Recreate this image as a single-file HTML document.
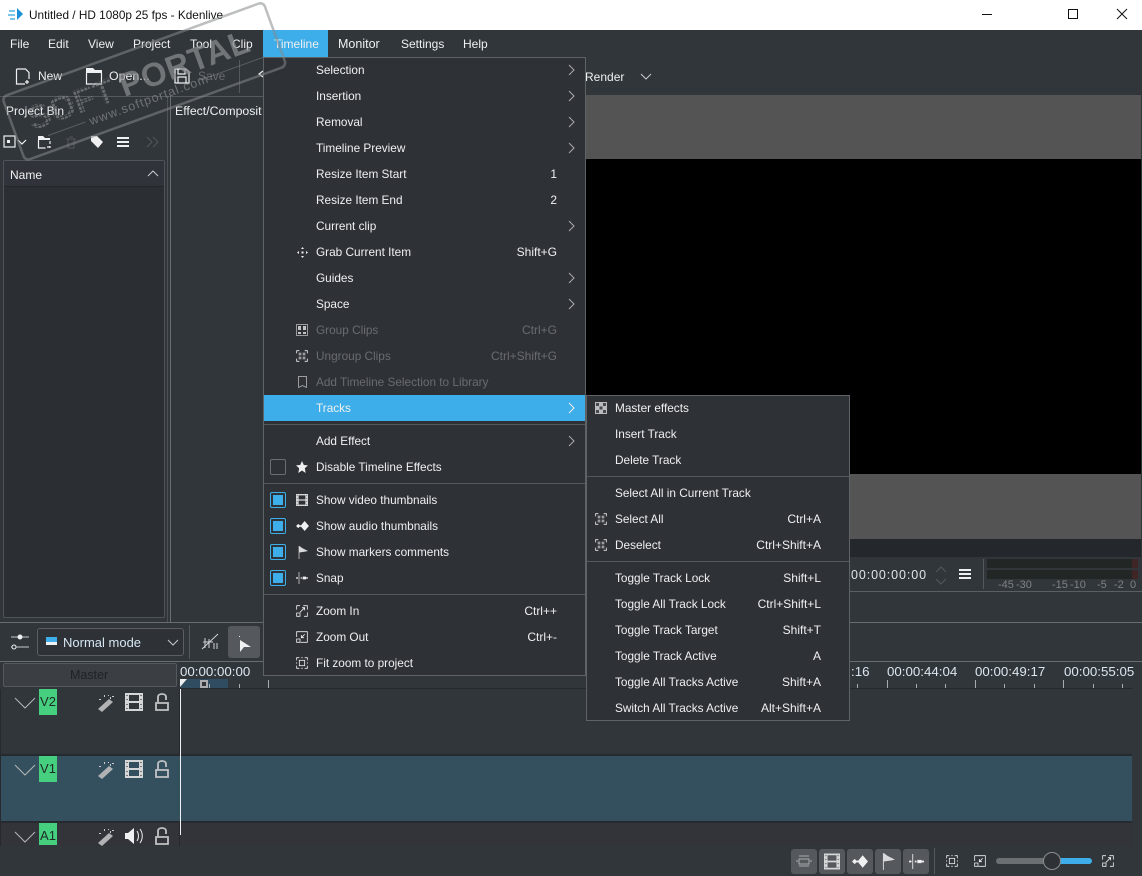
<!DOCTYPE html>
<html><head><meta charset="utf-8"><title>Kdenlive</title>
<style>
html,body{margin:0;padding:0;background:#31363b}
body{position:relative;width:1142px;height:876px;overflow:hidden;font-family:"Liberation Sans",sans-serif;font-size:12px;color:#eff0f1}
.a{position:absolute}
.t{position:absolute;line-height:16px;white-space:nowrap}
.b{position:absolute;box-sizing:border-box}
.m{position:absolute;box-sizing:border-box;background:#2e3136;border:1px solid #606366;font-size:11.8px}
.r{position:absolute;left:0;right:0;height:26px;line-height:26px;white-space:nowrap}
.r>span{position:absolute;top:0}
.r>.k{right:28px;font-size:12px}
.r>svg{position:absolute}
.d{color:#696c70}
.s{position:absolute;left:0;right:0;height:1px;background:#55585c}
.cb{position:absolute;left:6px;top:4px;width:16px;height:16px;box-sizing:border-box;border:1px solid #3daee9;border-radius:2px;background:#2e3136}
.cb:after{content:"";position:absolute;left:2px;top:2px;width:10px;height:10px;background:#3daee9}
svg{overflow:visible}
.i{fill:none;stroke:#eff0f1;stroke-width:1.2}
.f{fill:#eff0f1;stroke:none}
.tm{position:absolute;top:664px;line-height:16px;color:#dce6ef;font-size:13.3px}
.lb{position:absolute;top:577px;line-height:16px;color:#7f8285;font-size:11px}
.bt{position:absolute;top:849px;width:26px;height:25px;background:#55585c;border-radius:3px}
.tg{position:absolute;left:39px;width:18px;background:#46cf7e;color:#1d2a26;text-align:center;line-height:26px;font-size:13px}
</style></head>
<body>
<svg width="0" height="0" style="position:absolute"><defs>
<pattern id="dots" width="4" height="4" patternUnits="userSpaceOnUse"><rect width="3" height="3" fill="#8a8d90" fill-opacity=".6"/></pattern>
<symbol id="ch" viewBox="0 0 8 12"><path d="M2 1l5 5-5 5" fill="none" stroke="#a9abae" stroke-width="1"/></symbol>
<symbol id="dn" viewBox="0 0 12 8"><path d="M1 1l5 5 5-5" fill="none" stroke="#c8cacc" stroke-width="1"/></symbol>
<symbol id="film" viewBox="0 0 18 18"><path fill="#d4d6d8" fill-rule="evenodd" d="M0 0h18v18H0zM4 2v6h10V2zM4 10v6h10v-6z"/><path fill="#777" d="M1 2h2v1H1zM15 2h2v1h-2zM1 6h2v1H1zM15 6h2v1h-2zM1 11h2v1H1zM15 11h2v1h-2zM1 15h2v1H1zM15 15h2v1h-2z"/></symbol>
<symbol id="wave" viewBox="0 0 18 14"><path class="f" d="M0 7l3-3 2 2h2l5-6 6 7-6 7-5-6H5l-2 2z"/></symbol>
<symbol id="flag" viewBox="0 0 14 18"><path fill="#d8dadc" d="M1 0h1l4 3 8 4-5 1-7 1v9H1z"/></symbol>
<symbol id="snap" viewBox="0 0 18 18"><path class="f" d="M4 0h1v18H4zM0 8h3v2H0zM7 8h2v2H7zM10 7h5v1h3v2h-3v1h-5z"/></symbol>
<symbol id="zin" viewBox="0 0 18 18"><path class="i" d="M1 7V1h5M11 1h6v6M17 11v6h-5M6 11l7-7M9 4h4v4M1 12h5v5H1z"/></symbol>
<symbol id="zout" viewBox="0 0 18 18"><path class="i" d="M1 9V1h16v16H7M13 5l-5 5M8 6v4h4M1 12h5v5H1z"/></symbol>
<symbol id="fit" viewBox="0 0 18 18"><path class="i" d="M1 5V1h4M13 1h4v4M17 13v4h-4M5 17H1v-4M1 8v2M17 8v2M8 1h2M8 17h2"/><rect class="i" x="5" y="5" width="8" height="8"/></symbol>
<symbol id="wand" viewBox="0 0 18 18"><path d="M1 15L12 5l4 3L5 18z" fill="#b0b2b4"/><path d="M13 3h1v2h-1zM7 1h1v2H7zM2 5h2v1H2zM11 1h1v1h-1zM15 2h2v1h-2z" fill="#c9cbcd"/></symbol>
<symbol id="lock" viewBox="0 0 14 18"><path d="M1 10h12v7H1zM3 10V4c0-4 8-4 8 0v3" fill="none" stroke="#c0c2c4" stroke-width="1.8"/></symbol>
<symbol id="sel" viewBox="0 0 18 18"><path class="i" d="M1 5V1h4M13 1h4v4M17 13v4h-4M5 17H1v-4" stroke="#bbb"/><path d="M4 4h4v4H4zM10 4h4v4h-4zM4 10h4v4H4zM10 10h4v4h-4z" fill="#9a9c9e"/></symbol>
</defs></svg>

<!-- title bar -->
<div class="b" style="left:0;top:0;width:1142px;height:30px;background:#fff"></div>
<svg class="a" style="left:8px;top:7px" width="16" height="16" viewBox="0 0 16 16"><path d="M9 1l6 6-6 6z" fill="#1d8fd6"/><path d="M1 3h6v2H1zM0 7h7v2H0zM2 11h5v2H2z" fill="#7cc6ec"/></svg>
<div class="t" style="left:29px;top:7px;color:#111;font-size:11.8px">Untitled / HD 1080p 25 fps - Kdenlive</div>
<div class="b" style="left:982px;top:14px;width:10px;height:1px;background:#111"></div>
<div class="b" style="left:1068px;top:9px;width:10px;height:10px;border:1px solid #111"></div>
<svg class="a" style="left:1117px;top:9px" width="11" height="11"><path d="M0 0l10 10M10 0L0 10" stroke="#111" fill="none"/></svg>

<!-- menubar -->
<div class="b" style="left:263px;top:30px;width:65px;height:27px;background:#3daee9"></div>
<div class="t" style="left:10px;top:36px">File</div>
<div class="t" style="left:48px;top:36px">Edit</div>
<div class="t" style="left:88px;top:36px">View</div>
<div class="t" style="left:133px;top:36px">Project</div>
<div class="t" style="left:190px;top:36px">Tool</div>
<div class="t" style="left:232px;top:36px">Clip</div>
<div class="t" style="left:274px;top:36px">Timeline</div>
<div class="t" style="left:338px;top:36px;font-size:12.5px">Monitor</div>
<div class="t" style="left:401px;top:36px">Settings</div>
<div class="t" style="left:463px;top:36px">Help</div>

<!-- toolbar -->
<svg class="a" style="left:15px;top:68px" width="16" height="17"><path class="i" d="M1.500 1h9l3.500 3.500V11M1.500 1v15H10M12 12v4M10 14h4"/></svg>
<div class="t" style="left:38px;top:68px">New</div>
<svg class="a" style="left:86px;top:68px" width="17" height="17"><path class="f" d="M0 0h7l2 2h7v3H0z"/><path class="i" d="M.5 5v11h15V5"/></svg>
<div class="t" style="left:109px;top:68px;font-size:12.4px">Open...</div>
<svg class="a" style="left:174px;top:68px" width="16" height="16"><path class="i" d="M1 1h11l3 3v11H1zM4 1v5h7V1M4 15V9h8v6" stroke="#c8cacc"/></svg>
<div class="t d" style="left:198px;top:68px">Save</div>
<div class="b" style="left:239px;top:60px;width:1px;height:33px;background:#55585c"></div>
<svg class="a" style="left:258px;top:68px" width="5" height="14"><path class="i" d="M5 3L1 6l4 3"/></svg>
<div class="t" style="left:585px;top:69px">Render</div>
<svg class="a" style="left:640px;top:73px" width="12" height="8"><use href="#dn"/></svg>

<!-- docks -->
<div class="b" style="left:0;top:96px;width:264px;height:1px;background:#55585c"></div>
<div class="b" style="left:167px;top:96px;width:1px;height:526px;background:#4e5256"></div>
<div class="b" style="left:170px;top:96px;width:1px;height:526px;background:#6a6d70"></div>
<div class="t" style="left:6px;top:103px">Project Bin</div>
<div class="t" style="left:175px;top:103px;font-size:12.3px">Effect/Composit</div>
<div class="b" style="left:0;top:622px;width:1142px;height:1px;background:#6a6d70"></div>
<svg class="a" style="left:3px;top:135px" width="24" height="14"><rect class="i" x="1" y="1" width="11" height="11"/><rect class="f" x="4" y="5" width="3" height="3"/><path class="i" d="M15 5l4 4 4-4" stroke="#a9abae"/></svg>
<svg class="a" style="left:38px;top:136px" width="13" height="13"><path class="f" d="M0 0h5l2 2h5v2H0z"/><path class="i" d="M.5 4v8h7M12 5v3M12 10v2M9 11h3" /></svg>
<svg class="a" style="left:65px;top:136px" width="12" height="13"><path d="M1 3h10M3 3v9h6V3M4 1h4" stroke="#54575a" fill="none"/></svg>
<svg class="a" style="left:91px;top:136px" width="13" height="13"><path class="f" d="M0 0h6l6 6-5 6-7-7z"/></svg>
<div class="b" style="left:117px;top:137px;width:12px;height:2px;background:#eff0f1"></div>
<div class="b" style="left:117px;top:141px;width:12px;height:2px;background:#eff0f1"></div>
<div class="b" style="left:117px;top:145px;width:12px;height:2px;background:#eff0f1"></div>
<svg class="a" style="left:146px;top:136px" width="13" height="12"><path d="M1 1l5 5-5 5M7 1l5 5-5 5" stroke="#54575a" fill="none"/></svg>
<div class="b" style="left:3px;top:160px;width:162px;height:458px;background:#2b2e33;border:1px solid #505357;border-radius:2px"></div>
<div class="b" style="left:4px;top:161px;width:160px;height:26px;background:#30343a;border-bottom:1px solid #232629"></div>
<div class="t" style="left:10px;top:167px">Name</div>
<svg class="a" style="left:147px;top:170px" width="12" height="8"><path d="M1 6l5-5 5 5" fill="none" stroke="#c8cacc"/></svg>

<!-- monitor -->
<div class="b" style="left:586px;top:95px;width:555px;height:64px;background:#545454"></div>
<div class="b" style="left:586px;top:159px;width:555px;height:315px;background:#000"></div>
<div class="b" style="left:586px;top:474px;width:555px;height:65px;background:#545454"></div>
<div class="b" style="left:586px;top:539px;width:555px;height:18px;background:#24272b"></div>
<div class="b" style="left:586px;top:591px;width:556px;height:1px;background:#5c5f62"></div>
<div class="t" style="left:851px;top:567px;font-size:12.5px;letter-spacing:.9px;color:#dfe5ea">00:00:00:00</div>
<svg class="a" style="left:935px;top:566px" width="12" height="19"><path d="M1 6l5-5 5 5M1 13l5 5 5-5" fill="none" stroke="#55585b"/></svg>
<div class="b" style="left:959px;top:569px;width:12px;height:2px;background:#eff0f1"></div>
<div class="b" style="left:959px;top:573px;width:12px;height:2px;background:#eff0f1"></div>
<div class="b" style="left:959px;top:577px;width:12px;height:2px;background:#eff0f1"></div>
<div class="b" style="left:983px;top:559px;width:1px;height:30px;background:#55585c"></div>
<div class="b" style="left:987px;top:559px;width:151px;height:9px;background:#222725"></div>
<div class="b" style="left:987px;top:570px;width:151px;height:9px;background:#222725"></div>
<div class="b" style="left:1132px;top:559px;width:6px;height:9px;background:#3f2526"></div>
<div class="b" style="left:1132px;top:570px;width:6px;height:9px;background:#3f2526"></div>
<div class="lb" style="left:998px">-45</div>
<div class="lb" style="left:1016px">-30</div>
<div class="lb" style="left:1052px">-15</div>
<div class="lb" style="left:1070px">-10</div>
<div class="lb" style="left:1097px">-5</div>
<div class="lb" style="left:1114px">-2</div>
<div class="lb" style="left:1130px">0</div>

<!-- timeline toolbar -->
<svg class="a" style="left:11px;top:633px" width="18" height="18"><path d="M0 4h18M0 14h18" stroke="#c8cacc" fill="none"/><circle cx="9" cy="4" r="2.5" fill="#eff0f1"/><circle cx="3" cy="14" r="2" fill="#31363b" stroke="#eff0f1"/></svg>
<div class="b" style="left:37px;top:628px;width:147px;height:28px;border:1px solid #5c5f62;border-radius:3px;background:#2e3237"></div>
<div class="b" style="left:46px;top:637px;width:11px;height:8px;background:linear-gradient(#3daee9 0 5px,#eff0f1 5px)"></div>
<div class="t" style="left:63px;top:635px;color:#d5e6f2;font-size:13px">Normal mode</div>
<svg class="a" style="left:167px;top:639px" width="12" height="8"><use href="#dn"/></svg>
<div class="b" style="left:189px;top:625px;width:1px;height:34px;background:#55585c"></div>
<svg class="a" style="left:202px;top:634px" width="17" height="17"><path d="M0 15L16 0M1 8h10M3 4v10M7 5v9M12 9v6M15 9v6" stroke="#d0d2d4" fill="none"/></svg>
<div class="b" style="left:228px;top:626px;width:32px;height:32px;background:#55585c;border-radius:3px"></div>
<svg class="a" style="left:238px;top:634px" width="14" height="18"><path class="f" d="M1 2h1v1H1zM2 6l0 12 4-5 7 0z"/></svg>

<!-- timeline -->
<div class="b" style="left:0;top:661px;width:1142px;height:1px;background:#6a6d70"></div>
<div class="b" style="left:3px;top:663px;width:174px;height:24px;background:#3b3e42;border:1px solid #55585c;border-radius:2px"></div>
<div class="t" style="left:70px;top:667px;color:#1f2226;font-size:12.5px">Master</div>
<div class="tm" style="left:180px">00:00:00:00</div>
<div class="tm" style="left:851px">:16</div>
<div class="tm" style="left:887px">00:00:44:04</div>
<div class="tm" style="left:975px">00:00:49:17</div>
<div class="tm" style="left:1064px">00:00:55:05</div>
<div class="b" style="left:181px;top:679px;width:47px;height:9px;background:#2f4c60"></div>
<div class="b" style="left:200px;top:680px;width:8px;height:8px;border:2px solid #a9abae;background:#31363b"></div>
<div class="b" style="left:180px;top:688px;width:952px;height:1px;background:#25282c"></div>
<svg class="a" style="left:180px;top:679px" width="8" height="9"><path d="M0 0h7L0 8z" fill="#eff0f1"/></svg>
<div class="b" style="left:209px;top:684px;width:1px;height:4px;background:#a9abae"></div>
<div class="b" style="left:239px;top:684px;width:1px;height:4px;background:#a9abae"></div>
<div class="b" style="left:268px;top:680px;width:1px;height:8px;background:#a9abae"></div>
<div class="b" style="left:857px;top:684px;width:1px;height:4px;background:#a9abae"></div>
<div class="b" style="left:887px;top:680px;width:1px;height:8px;background:#a9abae"></div>
<div class="b" style="left:916px;top:684px;width:1px;height:4px;background:#a9abae"></div>
<div class="b" style="left:945px;top:684px;width:1px;height:4px;background:#a9abae"></div>
<div class="b" style="left:975px;top:680px;width:1px;height:8px;background:#a9abae"></div>
<div class="b" style="left:1004px;top:684px;width:1px;height:4px;background:#a9abae"></div>
<div class="b" style="left:1034px;top:684px;width:1px;height:4px;background:#a9abae"></div>
<div class="b" style="left:1063px;top:680px;width:1px;height:8px;background:#a9abae"></div>
<div class="b" style="left:1093px;top:684px;width:1px;height:4px;background:#a9abae"></div>
<div class="b" style="left:1122px;top:684px;width:1px;height:4px;background:#a9abae"></div>

<div class="b" style="left:0;top:689px;width:1px;height:157px;background:#26292d"></div>
<div class="b" style="left:179px;top:689px;width:1px;height:157px;background:#26292d"></div>
<div class="b" style="left:0;top:754px;width:1132px;height:2px;background:#26292d"></div>
<div class="b" style="left:1px;top:756px;width:1131px;height:65px;background:#34505f"></div>
<div class="b" style="left:0;top:821px;width:1132px;height:2px;background:#26292d"></div>
<div class="b" style="left:1px;top:823px;width:178px;height:23px;background:#33343a"></div>
<div class="b" style="left:180px;top:823px;width:952px;height:23px;background:#33343a"></div>

<svg class="a" style="left:15px;top:697px" width="21" height="12"><path d="M0 1l10 10L20 1" fill="none" stroke="#b4b6b8"/></svg>
<div class="tg" style="top:689px;height:26px">V2</div>
<svg class="a" style="left:97px;top:694px" width="18" height="18"><use href="#wand"/></svg>
<svg class="a" style="left:125px;top:693px" width="18" height="18"><use href="#film"/></svg>
<svg class="a" style="left:155px;top:693px" width="14" height="18"><use href="#lock"/></svg>

<svg class="a" style="left:15px;top:764px" width="21" height="12"><path d="M0 1l10 10L20 1" fill="none" stroke="#b4b6b8"/></svg>
<div class="tg" style="top:756px;height:26px">V1</div>
<svg class="a" style="left:97px;top:761px" width="18" height="18"><use href="#wand"/></svg>
<svg class="a" style="left:125px;top:760px" width="18" height="18"><use href="#film"/></svg>
<svg class="a" style="left:155px;top:760px" width="14" height="18"><use href="#lock"/></svg>

<svg class="a" style="left:15px;top:831px" width="21" height="12"><path d="M0 1l10 10L20 1" fill="none" stroke="#b4b6b8"/></svg>
<div class="tg" style="top:823px;height:22px">A1</div>
<svg class="a" style="left:97px;top:828px" width="18" height="18"><use href="#wand"/></svg>
<svg class="a" style="left:125px;top:827px" width="18" height="18"><path class="f" d="M0 6h3l6-5v16l-6-5H0z"/><path d="M12 4c2 3 2 7 0 10M15 2c3 4 3 10 0 14" fill="none" stroke="#eff0f1"/></svg>
<svg class="a" style="left:155px;top:827px" width="14" height="18"><use href="#lock"/></svg>
<div class="b" style="left:180px;top:689px;width:1px;height:146px;background:#eff0f1"></div>

<!-- status bar -->
<div class="bt" style="left:791px"></div><div class="bt" style="left:819px"></div><div class="bt" style="left:847px"></div><div class="bt" style="left:875px"></div><div class="bt" style="left:903px"></div>
<svg class="a" style="left:796px;top:855px" width="16" height="13"><path d="M3 1h10M3 11h10M3 4h10v5H3zM0 6h2M14 6h2" stroke="#a9abae" fill="none"/></svg>
<svg class="a" style="left:824px;top:853px" width="16" height="17"><use href="#film"/></svg>
<svg class="a" style="left:852px;top:855px" width="16" height="13"><use href="#wave"/></svg>
<svg class="a" style="left:882px;top:853px" width="13" height="17"><use href="#flag"/></svg>
<svg class="a" style="left:909px;top:854px" width="15" height="15"><use href="#snap"/></svg>
<div class="b" style="left:934px;top:848px;width:1px;height:26px;background:#55585c"></div>
<svg class="a" style="left:946px;top:855px" width="12" height="12"><use href="#fit"/></svg>
<svg class="a" style="left:974px;top:855px" width="12" height="12"><use href="#zout"/></svg>
<div class="b" style="left:996px;top:858px;width:50px;height:6px;background:#6c6f72;border-radius:3px"></div>
<div class="b" style="left:1058px;top:858px;width:34px;height:6px;background:#3daee9;border-radius:3px"></div>
<div class="b" style="left:1043px;top:852px;width:18px;height:18px;background:#2e3237;border:1px solid #8b8e91;border-radius:50%"></div>
<svg class="a" style="left:1102px;top:855px" width="12" height="12"><use href="#zin"/></svg>

<!-- main menu -->
<div class="m" style="left:263px;top:57px;width:323px;height:619px">
<div class="r" style="top:-1px"><span style="left:52px">Selection</span><svg style="left:303px;top:7px" width="8" height="12"><use href="#ch"/></svg></div>
<div class="r" style="top:25px"><span style="left:52px">Insertion</span><svg style="left:303px;top:7px" width="8" height="12"><use href="#ch"/></svg></div>
<div class="r" style="top:51px"><span style="left:52px">Removal</span><svg style="left:303px;top:7px" width="8" height="12"><use href="#ch"/></svg></div>
<div class="r" style="top:77px"><span style="left:52px">Timeline Preview</span><svg style="left:303px;top:7px" width="8" height="12"><use href="#ch"/></svg></div>
<div class="r" style="top:103px"><span style="left:52px">Resize Item Start</span><span class="k">1</span></div>
<div class="r" style="top:129px"><span style="left:52px">Resize Item End</span><span class="k">2</span></div>
<div class="r" style="top:155px"><span style="left:52px">Current clip</span><svg style="left:303px;top:7px" width="8" height="12"><use href="#ch"/></svg></div>
<div class="r" style="top:181px"><svg style="left:33px;top:8px" width="11" height="11"><path class="f" d="M4 2l1.500-2L7 2zM4 9l1.500 2L7 9zM2 4L0 5.500 2 7zM9 4l2 1.500L9 7zM4.500 4.500h2v2h-2z"/></svg><span style="left:52px">Grab Current Item</span><span class="k">Shift+G</span></div>
<div class="r" style="top:207px"><span style="left:52px">Guides</span><svg style="left:303px;top:7px" width="8" height="12"><use href="#ch"/></svg></div>
<div class="r" style="top:233px"><span style="left:52px">Space</span><svg style="left:303px;top:7px" width="8" height="12"><use href="#ch"/></svg></div>
<div class="r d" style="top:259px"><svg style="left:32px;top:7px" width="12" height="12"><rect x=".5" y=".5" width="11" height="11" fill="none" stroke="#9a9c9e"/><path d="M2 2h3v4H2zM7 2h3v4H7zM2 8h3v2H2zM7 8h3v2H7z" fill="#c0c2c4"/></svg><span style="left:52px">Group Clips</span><span class="k">Ctrl+G</span></div>
<div class="r d" style="top:285px"><svg style="left:32px;top:7px" width="12" height="12"><use href="#sel"/></svg><span style="left:52px">Ungroup Clips</span><span class="k">Ctrl+Shift+G</span></div>
<div class="r d" style="top:311px"><svg style="left:34px;top:7px" width="9" height="12"><path d="M.5.500h8v11l-4-2-4 2z" fill="none" stroke="#9a9c9e"/></svg><span style="left:52px">Add Timeline Selection to Library</span></div>
<div class="r" style="top:337px;background:#3daee9"><span style="left:52px">Tracks</span><svg style="left:303px;top:7px" width="8" height="12"><path d="M2 1l5 5-5 5" fill="none" stroke="#eff0f1"/></svg></div>
<div class="s" style="top:366px"></div>
<div class="r" style="top:370px"><span style="left:52px">Add Effect</span><svg style="left:303px;top:7px" width="8" height="12"><use href="#ch"/></svg></div>
<div class="r" style="top:396px"><div class="b" style="left:6px;top:5px;width:16px;height:16px;border:1px solid #6b6e71;border-radius:2px"></div><svg style="left:32px;top:7px" width="12" height="12"><path class="f" d="M6 0l1.800 4 4.200.4-3.200 2.800L9.700 12 6 9.500 2.300 12l.9-4.800L0 4.400 4.200 4z"/></svg><span style="left:52px">Disable Timeline Effects</span></div>
<div class="s" style="top:425px"></div>
<div class="r" style="top:429px"><div class="cb" style="top:5px"></div><svg style="left:32px;top:7px" width="12" height="12"><use href="#film"/></svg><span style="left:52px">Show video thumbnails</span></div>
<div class="r" style="top:455px"><div class="cb" style="top:5px"></div><svg style="left:32px;top:8px" width="13" height="10"><use href="#wave"/></svg><span style="left:52px">Show audio thumbnails</span></div>
<div class="r" style="top:481px"><div class="cb" style="top:5px"></div><svg style="left:33px;top:7px" width="12" height="13"><use href="#flag"/></svg><span style="left:52px">Show markers comments</span></div>
<div class="r" style="top:507px"><div class="cb" style="top:5px"></div><svg style="left:32px;top:7px" width="12" height="12"><use href="#snap"/></svg><span style="left:52px">Snap</span></div>
<div class="s" style="top:536px"></div>
<div class="r" style="top:540px"><svg style="left:32px;top:7px" width="12" height="12"><use href="#zin"/></svg><span style="left:52px">Zoom In</span><span class="k">Ctrl++</span></div>
<div class="r" style="top:566px"><svg style="left:32px;top:7px" width="12" height="12"><use href="#zout"/></svg><span style="left:52px">Zoom Out</span><span class="k">Ctrl+-</span></div>
<div class="r" style="top:592px"><svg style="left:32px;top:7px" width="12" height="12"><use href="#fit"/></svg><span style="left:52px">Fit zoom to project</span></div>
</div>

<!-- tracks submenu -->
<div class="m" style="left:586px;top:395px;width:264px;height:326px">
<div class="r" style="top:-1px"><svg style="left:8px;top:7px" width="12" height="12"><rect width="12" height="12" fill="#b9bbbd"/><path d="M1 1h3v3H1zM8 1h3v3H8zM4.500 4.500h3v3h-3zM1 8h3v3H1zM8 8h3v3H8z" fill="#45484c"/></svg><span style="left:28px">Master effects</span></div>
<div class="r" style="top:25px"><span style="left:28px">Insert Track</span></div>
<div class="r" style="top:51px"><span style="left:28px">Delete Track</span></div>
<div class="s" style="top:80px"></div>
<div class="r" style="top:84px"><span style="left:28px">Select All in Current Track</span></div>
<div class="r" style="top:110px"><svg style="left:8px;top:7px" width="12" height="12"><use href="#sel"/></svg><span style="left:28px">Select All</span><span class="k">Ctrl+A</span></div>
<div class="r" style="top:136px"><svg style="left:8px;top:7px" width="12" height="12"><use href="#sel"/></svg><span style="left:28px">Deselect</span><span class="k">Ctrl+Shift+A</span></div>
<div class="s" style="top:165px"></div>
<div class="r" style="top:169px"><span style="left:28px">Toggle Track Lock</span><span class="k">Shift+L</span></div>
<div class="r" style="top:195px"><span style="left:28px">Toggle All Track Lock</span><span class="k">Ctrl+Shift+L</span></div>
<div class="r" style="top:221px"><span style="left:28px">Toggle Track Target</span><span class="k">Shift+T</span></div>
<div class="r" style="top:247px"><span style="left:28px">Toggle Track Active</span><span class="k">A</span></div>
<div class="r" style="top:273px"><span style="left:28px">Toggle All Tracks Active</span><span class="k">Shift+A</span></div>
<div class="r" style="top:299px"><span style="left:28px">Switch All Tracks Active</span><span class="k">Alt+Shift+A</span></div>
</div>

<!-- watermark -->
<svg class="a" style="left:0;top:0" width="300" height="170" viewBox="0 0 300 170">
<g transform="translate(2 97) rotate(-20)" fill="none">
<rect x="0" y="0" width="278" height="68" rx="5" stroke="#85888b" stroke-opacity=".55" stroke-width="2.500"/>
<text x="17" y="42" font-family="Liberation Sans" font-size="34" font-weight="700" fill="url(#dots)">SOFT</text>
<text x="115" y="42" font-family="Liberation Sans" font-size="33" font-weight="700" fill="#8a8d90" fill-opacity=".72" letter-spacing=".5">PORTAL</text>
<text x="74" y="57" font-family="Liberation Sans" font-size="12.500" fill="#8a8d90" fill-opacity=".7" letter-spacing="1">www.softportal.com</text>
<path d="M30 52h40M200 52h60" stroke="#85888b" stroke-opacity=".5"/>
</g></svg>
</body></html>
